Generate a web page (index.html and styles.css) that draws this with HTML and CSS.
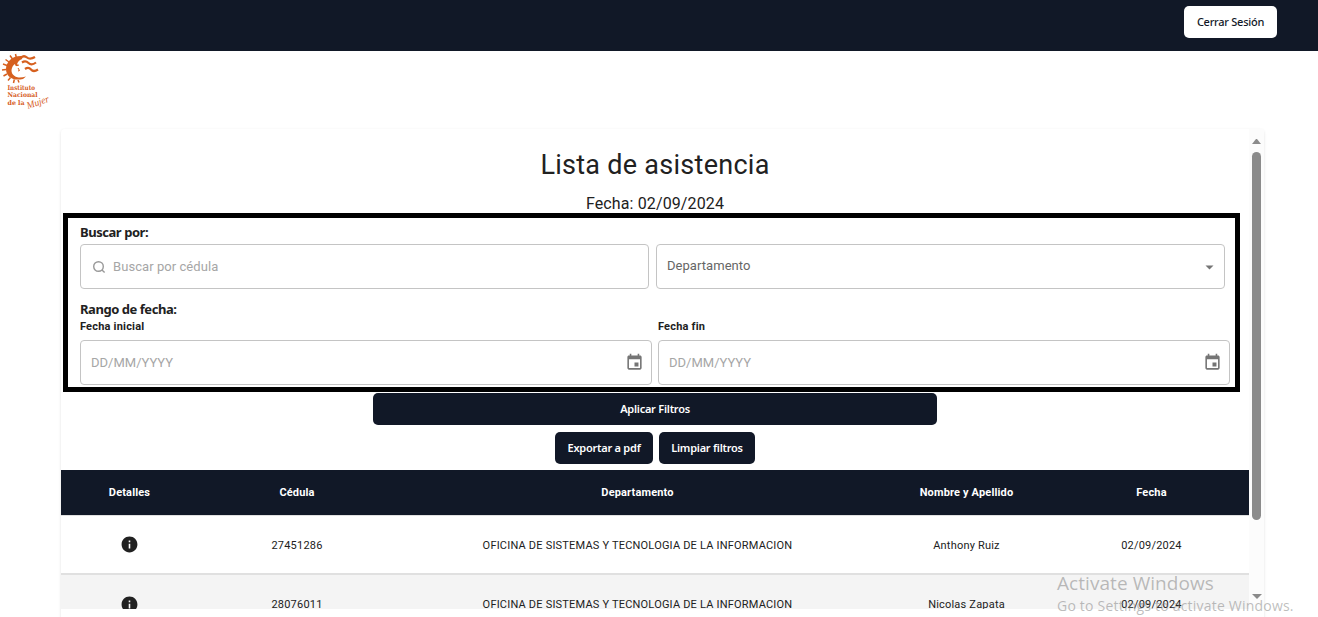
FILE: index.html
```html
<!DOCTYPE html>
<html lang="es">
<head>
<meta charset="utf-8">
<title>Lista de asistencia</title>
<link rel="stylesheet" href="styles.css">
</head>
<body>
<header class="topbar"><button class="btn btn-light"><span class="t-logout">Cerrar Sesión</span></button></header>
<div class="brand">
  <svg width="52" height="64" viewBox="0 0 52 64">
    <g fill="none" stroke="#d6601f" stroke-width="1.500">
      <path d="M15.500 3l.8 3.500M10 4.500l2.500 3.500M5.500 8.500l3.500 2.500M3 13l4 1.500M2 19l4-.5M3.500 25l3.500-2M8 29.500l2.500-3M13.500 32l.8-3.500M19 31.500l-1-2.500"/>
      <path stroke-width="2.200" d="M21 6.500q3-2.500 6 0t8-.5M22 11.500q3.500-2.500 6.500.5t7.500-.5M25 18q3.500-2.500 6 .5t7 0"/>
    </g>
    <path fill="#d6601f" d="M22 5C12 4.500 6 11 6 18s6 12.500 17 10l3-2.500c-3 .8-6 1.300-8.500 .8C12.500 25 10.500 21 12 17c.5-2 1.500-3 3-4l1 2 2-.2-.8-2.200c1-2.500 2.500-3.500 5-4.500z"/>
    <path d="M15 13.500q1.500 2 4 .5M18 17l1.500 2.500-1.500 .5" stroke="#d6601f" fill="none"/>
    <g class="logo-text">
      <text x="7.500" y="38.500" textLength="27.500" lengthAdjust="spacingAndGlyphs">Instituto</text>
      <text x="7.500" y="46" textLength="30" lengthAdjust="spacingAndGlyphs">Nacional</text>
      <text x="7.500" y="53.500" textLength="17" lengthAdjust="spacingAndGlyphs">de la</text>
    </g>
    <text class="logo-script" transform="translate(28 58) rotate(-19)" textLength="23" lengthAdjust="spacingAndGlyphs">Mujer</text>
  </svg>
</div>
<main class="card">
  <div class="scroller">
    <h1 class="title"><span>Lista de asistencia</span></h1>
    <p class="date">Fecha: 02/09/2024</p>
    <section class="filters">
      <div class="label"><span class="t-search">Buscar por:</span></div>
      <div class="row row-search">
        <div class="field">
          <svg class="search" width="14" height="14" viewBox="0 0 14 14" fill="none" stroke="#999" stroke-width="1.400"><circle cx="6.500" cy="6.500" r="4.800"/><path d="M10 10l2.600 2.600"/></svg>
          <span class="placeholder">Buscar por cédula</span>
        </div>
        <div class="field select"><span class="select-text">Departamento</span>
          <svg width="24" height="24" viewBox="0 0 24 24" fill="#757575"><path d="M8.500 10.500l4 4 4-4z"/></svg>
        </div>
      </div>
      <div class="label label-range"><span class="t-range">Rango de fecha:</span></div>
      <div class="row row-dates">
        <div class="date-col"><div class="sublabel">Fecha inicial</div>
          <div class="field"><span class="placeholder">DD/MM/YYYY</span><svg class="cal" width="19" height="19" viewBox="0 0 24 24" fill="#757575"><path d="M17 12h-5v5h5v-5zM16 1v2H8V1H6v2H5c-1.110 0-1.990.9-1.990 2L3 19c0 1.100.89 2 2 2h14c1.100 0 2-.9 2-2V5c0-1.100-.9-2-2-2h-1V1h-2zm3 18H5V8h14v11z"/></svg></div></div>
        <div class="date-col"><div class="sublabel">Fecha fin</div>
          <div class="field"><span class="placeholder">DD/MM/YYYY</span><svg class="cal" width="19" height="19" viewBox="0 0 24 24" fill="#757575"><path d="M17 12h-5v5h5v-5zM16 1v2H8V1H6v2H5c-1.110 0-1.990.9-1.990 2L3 19c0 1.100.89 2 2 2h14c1.100 0 2-.9 2-2V5c0-1.100-.9-2-2-2h-1V1h-2zm3 18H5V8h14v11z"/></svg></div></div>
      </div>
    </section>
    <div class="actions">
      <button class="btn apply"><span>Aplicar Filtros</span></button>
      <div class="pair"><button class="btn export"><span>Exportar a pdf</span></button><button class="btn clear"><span>Limpiar filtros</span></button></div>
    </div>
    <div class="grid head"><div>Detalles</div><div>Cédula</div><div>Departamento</div><div>Nombre y Apellido</div><div>Fecha</div></div>
    <div class="grid body-row">
      <div><svg width="19" height="19" viewBox="0 0 24 24" fill="#212121"><path d="M12 2C6.480 2 2 6.480 2 12s4.480 10 10 10 10-4.480 10-10S17.520 2 12 2zm1 15h-2v-6h2v6zm0-8h-2V7h2v2z"/></svg></div>
      <div class="cell">27451286</div><div class="cell dept">OFICINA DE SISTEMAS Y TECNOLOGIA DE LA INFORMACION</div><div class="cell">Anthony Ruiz</div><div class="cell">02/09/2024</div>
    </div>
    <div class="grid body-row alt">
      <div><svg width="19" height="19" viewBox="0 0 24 24" fill="#212121"><path d="M12 2C6.480 2 2 6.480 2 12s4.480 10 10 10 10-4.480 10-10S17.520 2 12 2zm1 15h-2v-6h2v6zm0-8h-2V7h2v2z"/></svg></div>
      <div>28076011</div><div class="dept">OFICINA DE SISTEMAS Y TECNOLOGIA DE LA INFORMACION</div><div>Nicolas Zapata</div><div>02/09/2024</div>
    </div>
  </div>
  <div class="scrollbar"><i class="up"></i><i class="thumb"></i><i class="down"></i></div>
</main>
<div class="watermark"><div class="wm-title">Activate Windows</div><div class="wm-sub">Go to Settings to activate Windows.</div></div>
</body>
</html>
```
FILE: styles.css
```css
* { box-sizing: border-box; }
body { margin: 0; height: 617px; overflow: hidden; background: #fff; color: #212121; font-family: Roboto, sans-serif; }
.topbar { height: 51px; background: #111827; display: flex; justify-content: flex-end; padding: 6px 41px 0 0; }
.btn { height: 32px; border: 0; border-radius: 5px; padding: 0 0 2px; background: #111827; color: #fff; font: 600 11px "Noto Sans", sans-serif; letter-spacing: -.25px; display: flex; align-items: center; justify-content: center; white-space: nowrap; }
.btn-light { width: 93px; background: #fff; color: #111827; font-weight: 500; letter-spacing: -.25px; }
.brand { height: 78px; }
.brand svg { display: block; }
.logo-text { font: bold 6.500px "DejaVu Serif", serif; fill: #d6601f; }
.logo-script { font: italic 10px "Liberation Serif", serif; fill: #d6601f; }
.card { margin-left: 61px; width: 1203px; height: 500px; display: flex; border-radius: 4px; box-shadow: 0 1px 3px rgba(0,0,0,.12); }
.scroller { width: 1188px; height: 480px; overflow: hidden; }
.title { margin: 0; padding-top: 16px; height: 63px; font-size: 27px; line-height: 40px; font-weight: 400; text-align: center; letter-spacing: .27px; }
.date { margin: 0; height: 21px; font-size: 16px; line-height: 24px; text-align: center; letter-spacing: .12px; }
.filters { margin-left: 2px; width: 1177px; height: 179px; border: 5px solid #000; padding: 4px 0 0 12px; }
.label { height: 22px; font: 700 13px/20px "Noto Sans", sans-serif; letter-spacing: -.45px; }
.row { display: flex; }
.row-search { gap: 7px; }
.field { width: 569px; height: 45px; border: 1px solid #c4c4c4; border-radius: 4px; padding-left: 11px; display: flex; align-items: center; font-size: 13px; }
.search { margin-right: 7px; }
.placeholder { color: #a6a6a6; letter-spacing: .06px; }
.select { padding-left: 10px; padding-right: 3px; justify-content: space-between; color: #666; letter-spacing: .05px; }
.select-text { margin-top: -2px; }
.label-range { margin-top: 10px; height: 20px; }
.row-dates { gap: 6px; }
.sublabel { height: 21px; font-size: 11px; line-height: 16px; font-weight: 700; letter-spacing: .2px; }
.row-dates .field { width: 572px; padding: 0 7px 0 10px; justify-content: space-between; }
.row-dates .placeholder { letter-spacing: 0; }
.actions { height: 78px; padding-top: 1px; display: flex; flex-direction: column; align-items: center; gap: 7px; }
.apply { width: 564px; }
.pair { display: flex; gap: 6px; }
.export { width: 98px; }
.clear { width: 96px; }
.grid { display: grid; grid-template-columns: 137px 198px 483px 175px 195px; align-items: center; text-align: center; font-size: 11px; }
.head { height: 46px; background: #111827; color: #fff; font-weight: 700; letter-spacing: .15px; border-bottom: 1px solid #e0e0e0; }
.body-row { height: 59px; border-bottom: 2px solid #e0e0e0; letter-spacing: .2px; }
.cell { padding-top: 1px; }
.body-row svg { display: block; margin: auto; }
.alt { background: #f4f4f4; height: 60px; }
.scrollbar { width: 15px; height: 480px; background: #fcfcfc; display: flex; flex-direction: column; align-items: center; padding-top: 10px; }
.up { width: 9px; border: solid transparent; border-width: 0 4.500px 5px; border-bottom-color: #8b8b8b; }
.thumb { width: 9px; height: 368px; margin-top: 8px; border-radius: 5px; background: #8b8b8b; }
.down { width: 9px; margin-top: 74px; border: 5px solid transparent; border-bottom: 0; border-top: 5px solid #8b8b8b; }
.watermark { position: absolute; left: 1057px; top: 571px; color: rgba(130,130,130,.53); font-family: "Open Sans", sans-serif; white-space: nowrap; }
.wm-title { font-size: 19px; line-height: 25px; letter-spacing: .06px; }
.wm-sub { font-size: 14px; line-height: 20px; letter-spacing: .21px; }
```
